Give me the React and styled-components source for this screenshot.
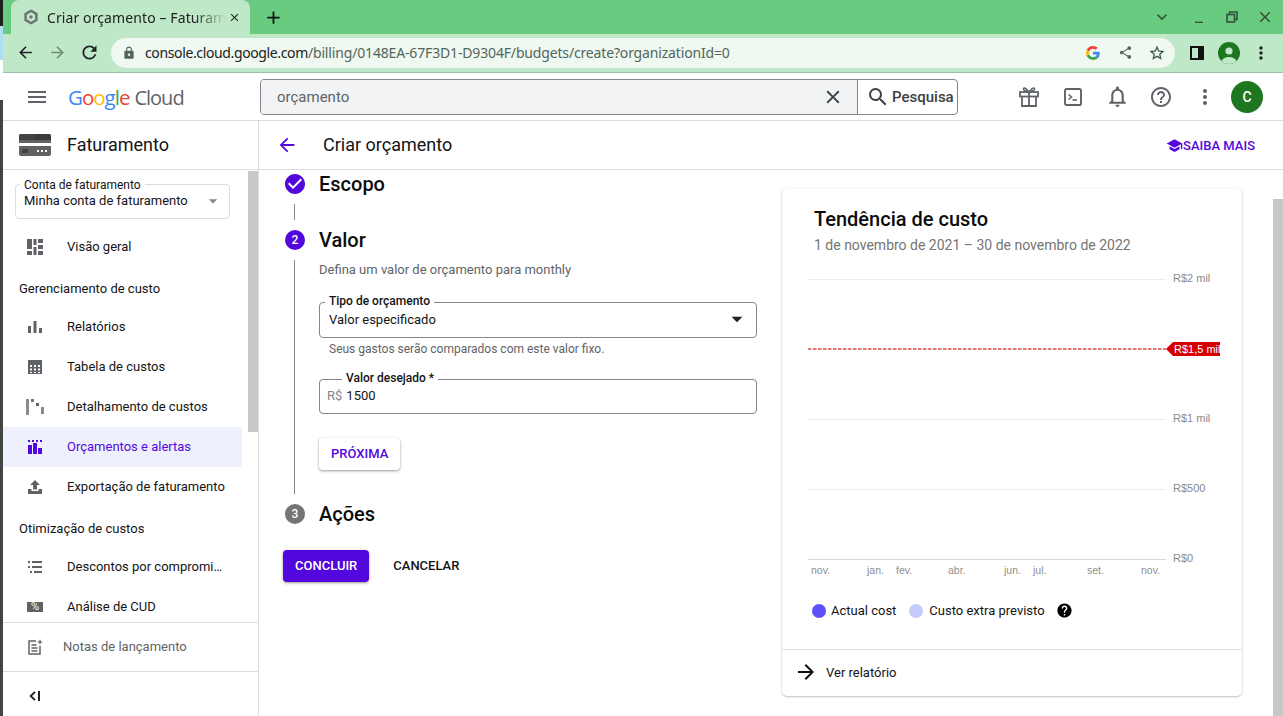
import React from 'react';
import styled, { createGlobalStyle } from 'styled-components';
import {
  MdArrowBack, MdArrowForward, MdRefresh, MdLock, MdShare, MdStarBorder, MdClose, MdAdd, MdMenu,
  MdSearch, MdNotificationsNone, MdHelpOutline, MdMoreVert, MdSchool, MdCheckCircle, MdArrowDropDown,
  MdHelp, MdKeyboardArrowDown, MdMinimize,
} from 'react-icons/md';

const PURPLE = '#5208dc';
const INK = '#141414';

const Global = createGlobalStyle`
  html, body { margin: 0; padding: 0; background: #fff; }
  body { font-family: Roboto, "Liberation Sans", sans-serif; color: ${INK}; overflow: hidden; }
  * { box-sizing: border-box; }
`;

const Page = styled.div`display: flex; width: 1283px; height: 716px; overflow: hidden; background: #fff;`;
const Edge = styled.div`display: flex; flex-direction: column; width: 3px; flex: none;`;
const EdgeBit = styled.div`height: ${p => p.$h}px; flex: ${p => (p.$h ? 'none' : 1)}; background: ${p => p.$c};`;
const Win = styled.div`display: flex; flex-direction: column; flex: 1; min-width: 0;`;

const TabStrip = styled.div`display: flex; align-items: center; height: 34px; flex: none; background: #68cb7f; padding-left: 8px;`;
const Tab = styled.div`
  display: flex; align-items: center; width: 239px; height: 34px; background: #bfe8c8; border-radius: 8px 8px 0 0;
  padding: 0 8px 0 12px; color: #202124;
`;
const TabTitle = styled.span`
  flex: 1; margin-left: 8px; font: 400 14px "Noto Sans", Roboto, sans-serif; white-space: nowrap; overflow: hidden; letter-spacing: .1px;
  -webkit-mask-image: linear-gradient(90deg, #000 82%, transparent 100%); mask-image: linear-gradient(90deg, #000 82%, transparent 100%);
`;
const IconSlot = styled.span`
  display: inline-flex; align-items: center; justify-content: center; flex: none;
  width: ${p => p.$w || 24}px; height: ${p => p.$h || p.$w || 24}px; color: ${p => p.$c || 'inherit'};
  margin-left: ${p => p.$ml || 0}px;
  svg { flex: none; }
`;
const StripFill = styled.div`flex: 1;`;
const WinControls = styled.div`display: flex; align-items: center; height: 34px; color: #33503b; padding-right: 8px;`;

const Toolbar = styled.div`
  display: flex; align-items: center; height: 39px; flex: none; background: #bfe8c8; border-bottom: 1px solid #9cc2a5;
  padding: 0 0 1px 3px; color: #202124;
`;
const Omnibox = styled.div`
  display: flex; align-items: center; width: 1064px; height: 30px; border-radius: 15px; background: #eff8f1; margin-left: 12px; padding: 0 9px 0 6px;
`;
const Url = styled.span`flex: 1; margin-left: 9px; font: 400 14px "Noto Sans", Roboto, sans-serif; color: #52665a; white-space: nowrap; letter-spacing: -.16px;`;
const UrlHost = styled.span`color: #202124; letter-spacing: -.37px;`;

const AppBar = styled.div`display: flex; align-items: center; height: 48px; flex: none; border-bottom: 1px solid #dadce0;`;
const Brand = styled.div`display: flex; align-items: baseline; width: 192px; margin-left: 19px; flex: none; font: 400 20.5px "Open Sans", Roboto, sans-serif; letter-spacing: -1px;`;
const Letter = styled.span`color: ${p => p.$c};`;
const BrandCloud = styled.span`color: #5f6368; margin-left: 5px; font-size: 20px;`;
const SearchBox = styled.div`display: flex; align-items: stretch; width: 698px; height: 36px; border: 1px solid #80868b; border-radius: 4px; overflow: hidden; flex: none;`;
const SearchField = styled.div`display: flex; align-items: center; width: 597px; background: #f1f3f4; padding: 1px 12px 0 16px; border-right: 1px solid #80868b; font-size: 15px; color: #5f6368;`;
const SearchText = styled.span`flex: 1;`;
const SearchBtn = styled.div`display: flex; align-items: center; flex: 1; padding-left: 8px; gap: 2px; font-size: 15px; font-weight: 500; color: #3c4043; white-space: nowrap;`;
const BarIcons = styled.div`display: flex; align-items: center; margin-left: 59px; color: #5f6368; gap: 20px;`;
const Avatar = styled.div`width: 32px; height: 32px; border-radius: 50%; background: #1e7720; color: #fff; display: flex; align-items: center; justify-content: center; font-size: 14px; font-weight: 500; margin-left: -6px;`;

const Body = styled.div`display: flex; flex: 1; min-height: 0;`;
const Sidebar = styled.aside`display: flex; flex-direction: column; width: 256px; flex: none; border-right: 1px solid #dadce0;`;
const SideHead = styled.div`display: flex; align-items: center; height: 49px; flex: none; padding-left: 16px; gap: 16px; border-bottom: 1px solid #dadce0; font-size: 18px; color: ${INK};`;
const SideTitle = styled.span`margin-bottom: 2px;`;
const NavScroll = styled.div`display: flex; height: 452px; flex: none; overflow: hidden;`;
const NavList = styled.div`width: 239px; flex: none; padding-top: 14px;`;
const Thumb = styled.div`width: 10px; height: 261px; margin: 1px 0 0 6px; background: #c8c8c8; flex: none;`;
const AccountSelect = styled.div`
  position: relative; display: flex; align-items: center; justify-content: space-between; width: 215px; height: 35px; margin: 0 0 8px 12px;
  border: 1px solid #dadce0; border-radius: 4px; padding: 0 8px 2px 8px; font-size: 13px; color: ${INK};
`;
const FloatLabel = styled.span`
  position: absolute; top: ${p => p.$t}px; left: ${p => p.$l}px; padding: 0 4px; background: #fff; font-size: 12px; line-height: 14px;
  font-weight: ${p => p.$w || 400}; color: ${INK}; white-space: nowrap;
`;
const NavItem = styled.div`
  display: flex; align-items: center; height: 40px; padding-left: 20px; gap: 20px; font-size: 13px; white-space: nowrap;
  background: ${p => (p.$active ? '#eef1fd' : 'transparent')}; color: ${p => (p.$active ? PURPLE : INK)};
`;
const NavLabel = styled.span`margin-bottom: 2px;`;
const NavHeading = styled.div`display: flex; align-items: center; height: 40px; padding: 2px 0 0 16px; font-size: 13px; color: ${INK};`;
const NavText = styled.span`overflow: hidden; text-overflow: ellipsis; width: 156px; margin-bottom: 2px;`;
const NotesRow = styled.div`display: flex; align-items: center; height: 50px; flex: none; border-top: 1px solid #dadce0; border-bottom: 1px solid #dadce0; padding-left: 20px; gap: 16px; color: #5f6368; font-size: 13px;`;
const CollapseRow = styled.div`display: flex; align-items: center; flex: 1; padding: 4px 0 0 20px;`;
const PercentTag = styled.span`display: flex; align-items: center; justify-content: center; width: 16px; height: 10px; background: #5f6368; color: #fff; font-size: 11px; line-height: 10px;`;

const Content = styled.div`display: flex; flex-direction: column; flex: 1; min-width: 0;`;
const SectionHead = styled.div`display: flex; align-items: center; height: 49px; flex: none; padding: 0 28px 0 16px; border-bottom: 1px solid #dadce0;`;
const PageTitle = styled.h1`flex: 1; margin: 0 0 2px 24px; font-size: 18px; font-weight: 400; color: ${INK};`;
const LearnLink = styled.a`display: flex; align-items: center; font-size: 13px; font-weight: 500; color: ${PURPLE};`;
const Main = styled.div`display: flex; flex: 1; min-height: 0;`;
const FormCol = styled.div`width: 523px; flex: none; padding: 4px 25px 0 26px;`;
const StepRow = styled.div`display: flex; align-items: center; height: 20px; gap: 14px;`;
const StepNum = styled.span`
  display: flex; align-items: center; justify-content: center; width: 20px; height: 20px; border-radius: 50%; flex: none;
  background: ${p => p.$c}; color: #fff; font-size: 12px; font-weight: 500;
`;
const StepTitle = styled.h2`margin: 0; font-size: 20px; font-weight: 500; color: #0c0c0c; line-height: 20px;`;
const ShortLine = styled.div`width: 1px; height: 16px; margin: 10px 0 10px 9px; background: #80868b;`;
const StepBody = styled.div`margin: 10px 0 10px 9px; padding: 0 0 24px 24px; border-left: 1px solid #80868b;`;
const Desc = styled.p`margin: 0; font-size: 13px; line-height: 20px; color: #5f6368;`;
const Field = styled.div`
  position: relative; display: flex; align-items: center; height: ${p => p.$h}px; width: 438px; margin-top: 22px; border: 1px solid #80868b; border-radius: 4px;
  padding: 0 ${p => (p.$select ? 13 : 9)}px 2px ${p => (p.$select ? 9 : 7)}px; font-size: 13px; color: ${INK};
`;
const FieldValue = styled.span`flex: 1;`;
const Prefix = styled.span`color: #80868b; margin-right: 4px;`;
const Hint = styled.div`margin: 3px 0 0 10px; font-size: 12px; line-height: 16px; color: #5f6368;`;
const Btn = styled.button`
  display: block; height: 32px; padding: 0 12px 2px; border: 0; border-radius: 4px; font: 500 13px Roboto, sans-serif; cursor: pointer;
  background: ${p => (p.$kind === 'primary' ? PURPLE : p.$kind === 'raised' ? '#fff' : 'transparent')};
  color: ${p => (p.$kind === 'primary' ? '#fff' : p.$kind === 'raised' ? PURPLE : INK)};
  box-shadow: ${p => (p.$kind === 'text' ? 'none' : '0 1px 2px rgba(60,64,67,.35), 0 1px 3px 1px rgba(60,64,67,.15)')};
`;
const NextWrap = styled.div`margin-top: 24px;`;
const Actions = styled.div`display: flex; gap: 12px; margin: 26px 0 0 -2px;`;

const Card = styled.section`
  display: flex; flex-direction: column; width: 460px; height: 507px; margin-top: 19px; flex: none; background: #fff; border-radius: 5px;
  box-shadow: 0 1px 2px rgba(60,64,67,.3), 0 0 3px rgba(60,64,67,.08);
`;
const CardHead = styled.div`padding: 18px 0 0 32px;`;
const CardTitle = styled.h3`margin: 0; font-size: 20px; line-height: 24px; font-weight: 500; color: #0c0c0c;`;
const CardSub = styled.div`margin-top: 4px; font-size: 14px; line-height: 20px; color: #757575;`;
const ChartSvg = styled.svg`display: block; margin: 15px 0 0 26px; flex: none;`;
const Legend = styled.div`display: flex; align-items: center; height: 20px; margin: 18px 0 0 30px; font-size: 13px; color: ${INK};`;
const Dot = styled.span`width: 14px; height: 14px; border-radius: 50%; background: ${p => p.$c}; margin: 1px ${p => p.$mr}px 0 0; flex: none;`;
const LegendText = styled.span`margin-right: ${p => p.$mr}px;`;
const CardFoot = styled.div`display: flex; align-items: center; height: 47px; margin-top: auto; border-top: 1px solid #dadce0; padding: 0 0 2px 12px; gap: 8px; font-size: 13px; color: ${INK};`;
const Track = styled.div`flex: 1; display: flex; justify-content: flex-end; padding-top: 29px;`;
const MainThumb = styled.div`width: 10px; height: 100%; background: #c8c8c8;`;

const Svg = ({ w, h, vb, children, c }) => (
  <svg width={w} height={h} viewBox={vb || `0 0 ${w} ${h}`} fill={c || 'currentColor'}>{children}</svg>
);

const Favicon = () => (
  <Svg w={16} h={16} c="none">
    <path d="M8 1.8 13.4 5v6L8 14.2 2.6 11V5z" stroke="#6a706c" strokeWidth="2.4" />
    <circle cx="8" cy="8" r="1.7" fill="#6a706c" />
  </Svg>
);
const GLogo = () => (
  <svg width="14" height="14" viewBox="0 0 48 48">
    <path fill="#EA4335" d="M24 9.5c3.5 0 6.7 1.3 9.1 3.4l6.8-6.8C35.8 2.4 30.2 0 24 0 14.6 0 6.5 5.4 2.6 13.2l7.9 6.1C12.4 13.7 17.7 9.5 24 9.5z" />
    <path fill="#4285F4" d="M46.9 24.5c0-1.6-.1-3.1-.4-4.5H24v9h12.9c-.6 3-2.2 5.5-4.7 7.2l7.7 6c4.4-4.1 7-10.2 7-17.7z" />
    <path fill="#FBBC05" d="M10.5 28.7C10 27.2 9.8 25.6 9.8 24s.3-3.2.7-4.7l-7.9-6.1C.9 16.5 0 20.1 0 24s.9 7.5 2.6 10.8l7.9-6.1z" />
    <path fill="#34A853" d="M24 48c6.5 0 11.9-2.1 15.9-5.8l-7.7-6c-2.1 1.4-4.9 2.3-8.2 2.3-6.3 0-11.6-4.2-13.5-9.9l-7.9 6.1C6.5 42.6 14.6 48 24 48z" />
  </svg>
);
const SidePanel = () => (
  <Svg w={14} h={14} c="none">
    <rect x="1" y="1" width="12" height="12" stroke="#111" strokeWidth="2" />
    <rect x="8" y="1" width="5" height="12" fill="#111" />
  </Svg>
);
const Profile = () => (
  <svg width="22" height="22" viewBox="0 0 22 22">
    <defs><clipPath id="pc"><circle cx="11" cy="11" r="11" /></clipPath></defs>
    <g clipPath="url(#pc)">
      <rect width="22" height="22" fill="#1e7720" />
      <circle cx="11" cy="9" r="3.6" fill="#bfe8c8" />
      <ellipse cx="11" cy="20" rx="7.5" ry="5" fill="#bfe8c8" />
    </g>
  </svg>
);
const Restore = () => (
  <Svg w={12} h={12} c="none">
    <path d="M3.5 3.5V1h7.5v7.5H8.5" stroke="#33503b" strokeWidth="1.6" />
    <rect x="1" y="3.5" width="7.5" height="7.5" stroke="#33503b" strokeWidth="1.6" />
  </Svg>
);
const Gift = () => (
  <Svg w={20} h={21} c="none">
    <rect x="1" y="6" width="18" height="4.5" stroke="currentColor" strokeWidth="1.8" />
    <path d="M3 10.5V20h14v-9.5M10 6v14" stroke="currentColor" strokeWidth="1.8" />
    <path d="M10 6C8 3.5 6.8 1.5 5.2 2 3.6 2.6 4.4 5.4 10 6zM10 6c2-2.5 3.2-4.500 4.800-4 1.600.6.800 3.400-4.800 4z" stroke="currentColor" strokeWidth="1.5" />
  </Svg>
);
const Terminal = () => (
  <Svg w={18} h={18} c="none">
    <rect x="1" y="1" width="16" height="16" rx="1.6" stroke="currentColor" strokeWidth="1.9" />
    <path d="M4.500 6.500 7.500 9l-3 2.500" stroke="currentColor" strokeWidth="1.5" />
    <path d="M8.500 12h4.500" stroke="currentColor" strokeWidth="1.6" />
  </Svg>
);
const BillingCard = () => (
  <Svg w={32} h={22} c="#5f6368">
    <rect width="32" height="22" rx="2" fill="#616161" />
    <path d="M2 0h14v6H0V2a2 2 0 0 1 2-2z" fill="#424242" />
    <path d="M16 0h14a2 2 0 0 1 2 2v4H16z" fill="#3a3a3a" />
    <rect y="9" width="32" height="3" fill="#fff" />
    <rect x="3" y="15" width="6" height="4" fill="#424242" />
    <rect x="18" y="16" width="2" height="2" fill="#fff" />
    <rect x="22" y="16" width="2" height="2" fill="#fff" />
    <rect x="26" y="16" width="2" height="2" fill="#fff" />
  </Svg>
);
const Overview = () => (
  <Svg w={16} h={16} c="#5f6368">
    <rect x="0" y="0" width="5" height="10" /><rect x="0" y="12" width="5" height="4" />
    <rect x="6.500" y="0" width="3" height="6" /><rect x="6.500" y="8" width="3" height="8" />
    <rect x="11" y="0" width="5" height="4" /><rect x="11" y="6" width="5" height="4" /><rect x="11" y="12" width="5" height="4" />
  </Svg>
);
const Bars = () => (
  <Svg w={14} h={12} c="#5f6368">
    <rect x="0" y="5" width="3" height="7" /><rect x="5.500" y="0" width="3" height="12" /><rect x="11" y="7" width="3" height="5" />
  </Svg>
);
const TableIcon = () => (
  <Svg w={14} h={14} c="#5f6368">
    <path fillRule="evenodd" d="M0 0h14v14H0zM2 5v2h2V5zm4 0v2h2V5zm4 0v2h2V5zM2 8.500v2h2v-2zm4 0v2h2v-2zm4 0v2h2v-2zM2 12v1h2v-1zm4 0v1h2v-1zm4 0v1h2v-1z" />
  </Svg>
);
const Breakdown = () => (
  <Svg w={18} h={16} c="#9a9a9a">
    <rect x="0" y="0" width="3" height="16" fill="#8a8a8a" />
    <rect x="5" y="0" width="3" height="3" fill="#777" /><rect x="10" y="4" width="3" height="3" fill="#5f6368" /><rect x="15" y="8" width="3" height="7" fill="#8a8a8a" />
  </Svg>
);
const Budgets = () => (
  <Svg w={14} h={14} c={PURPLE}>
    <rect x="0" y="0" width="2" height="2" /><rect x="4" y="0" width="2" height="2" /><rect x="8" y="0" width="2" height="2" /><rect x="12" y="0" width="2" height="2" />
    <rect x="0" y="5" width="4" height="9" /><rect x="5" y="3" width="4" height="11" /><rect x="10" y="8" width="4" height="6" />
  </Svg>
);
const ExportIcon = () => (
  <Svg w={14} h={14} c="#5f6368">
    <path d="M7 0 12 5H9v4.500H5V5H2zM0 9h3.500v2h7V9H14v5H0z" />
  </Svg>
);
const Discounts = () => (
  <Svg w={14} h={12} c="#5f6368">
    <rect x="0" y="0" width="2" height="2" /><rect x="4" y="0" width="10" height="2" />
    <rect x="0" y="5" width="2" height="2" /><rect x="4" y="5" width="10" height="2" />
    <rect x="2" y="10" width="2" height="2" /><rect x="6" y="10" width="8" height="2" />
  </Svg>
);
const Notes = () => (
  <Svg w={16} h={16} c="none">
    <path d="M9 2H2v13h11V7" stroke="#5f6368" strokeWidth="1.500" />
    <path d="M4.500 6h5M4.500 9h6M4.500 12h6" stroke="#5f6368" strokeWidth="1.300" />
    <path d="M13 0l.8 2.200L16 3l-2.200.8L13 6l-.8-2.200L10 3l2.200-.8z" fill="#5f6368" />
  </Svg>
);
const Collapse = () => (
  <Svg w={12} h={10} c="none">
    <path d="M6 1 1.600 5 6 9" stroke="#202124" strokeWidth="1.800" />
    <path d="M10 0v10" stroke="#202124" strokeWidth="2" />
  </Svg>
);

const yAxis = [['R$2 mil', 9], ['R$1 mil', 149], ['R$500', 219], ['R$0', 289]];
const months = [['nov.', 3], ['jan.', 59], ['fev.', 88], ['abr.', 140], ['jun.', 196], ['jul.', 225], ['set.', 279], ['nov.', 333]];

const Chart = () => (
  <ChartSvg width="414" height="312" viewBox="0 0 414 312">
    {yAxis.map(([t, y]) => (
      <g key={t}>
        <line x1="0" x2="358" y1={y + 0.5} y2={y + 0.5} stroke={y === 289 ? '#d8d8d8' : '#ececec'} />
        <text x="365" y={y + 3} fontFamily="'Liberation Sans', Arial, sans-serif" fontSize="11" fill="#8a8a8a">{t}</text>
      </g>
    ))}
    <line x1="0" x2="358" y1="79" y2="79" stroke="#e87575" strokeWidth="2" strokeDasharray="3.500 1.500" />
    <path d="M358 79 365 72H412V86H365z" fill="#d60000" />
    <text x="366" y="83" fontFamily="'Liberation Sans', Arial, sans-serif" fontSize="11" fill="#fff">R$1,5 mil</text>
    {months.map(([t, x]) => (
      <text key={x} x={x} y="304" fontFamily="'Liberation Sans', Arial, sans-serif" fontSize="10.500" fill="#8f8f8f">{t}</text>
    ))}
  </ChartSvg>
);

export default function App() {
  return (
    <Page>
      <Global />
      <Edge>
        <EdgeBit $h={26} $c="#1f1f1f" />
        <EdgeBit $h={34} $c="#aee0f2" />
        <EdgeBit $h={40} $c="#ffffff" />
        <EdgeBit $c="#444444" />
      </Edge>
      <Win>
        <TabStrip>
          <Tab>
            <Favicon />
            <TabTitle>Criar orçamento – Faturamento</TabTitle>
            <IconSlot $w={16}><MdClose size={13} /></IconSlot>
          </Tab>
          <IconSlot $w={24} $ml={11} $c="#111"><MdAdd size={21} /></IconSlot>
          <StripFill />
          <WinControls>
            <IconSlot $w={20}><MdKeyboardArrowDown size={20} /></IconSlot>
            <IconSlot $w={20} $ml={17}><MdMinimize size={16} /></IconSlot>
            <IconSlot $w={20} $ml={13}><Restore /></IconSlot>
            <IconSlot $w={20} $ml={13}><MdClose size={18} /></IconSlot>
          </WinControls>
        </TabStrip>
        <Toolbar>
          <IconSlot $w={20} $ml={9}><MdArrowBack size={19} /></IconSlot>
          <IconSlot $w={20} $ml={12} $c="#6f8a76"><MdArrowForward size={19} /></IconSlot>
          <IconSlot $w={20} $ml={12}><MdRefresh size={21} /></IconSlot>
          <Omnibox>
            <IconSlot $w={14} $ml={5} $c="#52665a"><MdLock size={14} /></IconSlot>
            <Url><UrlHost>console.cloud.google.com</UrlHost>/billing/0148EA-67F3D1-D9304F/budgets/create?organizationId=0</Url>
            <IconSlot $w={16}><GLogo /></IconSlot>
            <IconSlot $w={16} $ml={16} $c="#52665a"><MdShare size={15} /></IconSlot>
            <IconSlot $w={18} $ml={15} $c="#33503b"><MdStarBorder size={18} /></IconSlot>
          </Omnibox>
          <IconSlot $w={16} $ml={14}><SidePanel /></IconSlot>
          <IconSlot $w={22} $ml={13}><Profile /></IconSlot>
          <IconSlot $w={20} $ml={11}><MdMoreVert size={20} /></IconSlot>
        </Toolbar>
        <AppBar>
          <IconSlot $w={24} $ml={22} $c="#5f6368"><MdMenu size={24} /></IconSlot>
          <Brand>
            <Letter $c="#4285f4">G</Letter><Letter $c="#ea4335">o</Letter><Letter $c="#fbbc05">o</Letter><Letter $c="#4285f4">g</Letter><Letter $c="#34a853">l</Letter><Letter $c="#ea4335">e</Letter>
            <BrandCloud>Cloud</BrandCloud>
          </Brand>
          <SearchBox>
            <SearchField>
              <SearchText>orçamento</SearchText>
              <IconSlot $w={24} $c="#3c4043"><MdClose size={22} /></IconSlot>
            </SearchField>
            <SearchBtn><MdSearch size={24} color="#3c4043" />Pesquisa</SearchBtn>
          </SearchBox>
          <BarIcons>
            <IconSlot $w={24}><Gift /></IconSlot>
            <IconSlot $w={24}><Terminal /></IconSlot>
            <IconSlot $w={24}><MdNotificationsNone size={25} /></IconSlot>
            <IconSlot $w={24}><MdHelpOutline size={24} /></IconSlot>
            <IconSlot $w={24}><MdMoreVert size={24} /></IconSlot>
            <Avatar>C</Avatar>
          </BarIcons>
        </AppBar>
        <Body>
          <Sidebar>
            <SideHead><BillingCard /><SideTitle>Faturamento</SideTitle></SideHead>
            <NavScroll>
              <NavList>
                <AccountSelect>
                  <FloatLabel $t={-7} $l={4}>Conta de faturamento</FloatLabel>
                  Minha conta de faturamento
                  <IconSlot $w={16} $c="#80868b"><MdArrowDropDown size={20} /></IconSlot>
                </AccountSelect>
                <NavItem><IconSlot $w={24}><Overview /></IconSlot><NavLabel>Visão geral</NavLabel></NavItem>
                <NavHeading>Gerenciamento de custo</NavHeading>
                <NavItem><IconSlot $w={24}><Bars /></IconSlot><NavLabel>Relatórios</NavLabel></NavItem>
                <NavItem><IconSlot $w={24}><TableIcon /></IconSlot><NavLabel>Tabela de custos</NavLabel></NavItem>
                <NavItem><IconSlot $w={24}><Breakdown /></IconSlot><NavLabel>Detalhamento de custos</NavLabel></NavItem>
                <NavItem $active><IconSlot $w={24}><Budgets /></IconSlot><NavLabel>Orçamentos e alertas</NavLabel></NavItem>
                <NavItem><IconSlot $w={24}><ExportIcon /></IconSlot><NavLabel>Exportação de faturamento</NavLabel></NavItem>
                <NavHeading>Otimização de custos</NavHeading>
                <NavItem><IconSlot $w={24}><Discounts /></IconSlot><NavText>Descontos por compromisso</NavText></NavItem>
                <NavItem><IconSlot $w={24}><PercentTag>%</PercentTag></IconSlot><NavLabel>Análise de CUD</NavLabel></NavItem>
              </NavList>
              <Thumb />
            </NavScroll>
            <NotesRow><IconSlot $w={24}><Notes /></IconSlot><NavLabel>Notas de lançamento</NavLabel></NotesRow>
            <CollapseRow><IconSlot $w={24}><Collapse /></IconSlot></CollapseRow>
          </Sidebar>
          <Content>
            <SectionHead>
              <IconSlot $w={24} $c={PURPLE}><MdArrowBack size={22} /></IconSlot>
              <PageTitle>Criar orçamento</PageTitle>
              <LearnLink><MdSchool size={17} />SAIBA MAIS</LearnLink>
            </SectionHead>
            <Main>
              <FormCol>
                <StepRow>
                  <IconSlot $w={20} $c={PURPLE}><MdCheckCircle size={24} /></IconSlot>
                  <StepTitle>Escopo</StepTitle>
                </StepRow>
                <ShortLine />
                <StepRow>
                  <StepNum $c={PURPLE}>2</StepNum>
                  <StepTitle>Valor</StepTitle>
                </StepRow>
                <StepBody>
                  <Desc>Defina um valor de orçamento para monthly</Desc>
                  <Field $h={36} $select>
                    <FloatLabel $t={-9} $l={5} $w={500}>Tipo de orçamento</FloatLabel>
                    <FieldValue>Valor especificado</FieldValue>
                    <IconSlot $w={12} $c="#202124"><MdArrowDropDown size={26} /></IconSlot>
                  </Field>
                  <Hint>Seus gastos serão comparados com este valor fixo.</Hint>
                  <Field $h={35}>
                    <FloatLabel $t={-9} $l={22} $w={500}>Valor desejado *</FloatLabel>
                    <Prefix>R$</Prefix>
                    <FieldValue>1500</FieldValue>
                  </Field>
                  <NextWrap><Btn $kind="raised">PRÓXIMA</Btn></NextWrap>
                </StepBody>
                <StepRow>
                  <StepNum $c="#757575">3</StepNum>
                  <StepTitle>Ações</StepTitle>
                </StepRow>
                <Actions>
                  <Btn $kind="primary">CONCLUIR</Btn>
                  <Btn $kind="text">CANCELAR</Btn>
                </Actions>
              </FormCol>
              <Card>
                <CardHead>
                  <CardTitle>Tendência de custo</CardTitle>
                  <CardSub>1 de novembro de 2021 – 30 de novembro de 2022</CardSub>
                </CardHead>
                <Chart />
                <Legend>
                  <Dot $c="#5e50f6" $mr={5} />
                  <LegendText $mr={13}>Actual cost</LegendText>
                  <Dot $c="#c3cbfb" $mr={6} />
                  <LegendText $mr={12}>Custo extra previsto</LegendText>
                  <IconSlot $w={16} $c="#000"><MdHelp size={17} /></IconSlot>
                </Legend>
                <CardFoot>
                  <MdArrowForward size={24} color="#111" />
                  Ver relatório
                </CardFoot>
              </Card>
              <Track><MainThumb /></Track>
            </Main>
          </Content>
        </Body>
      </Win>
    </Page>
  );
}
